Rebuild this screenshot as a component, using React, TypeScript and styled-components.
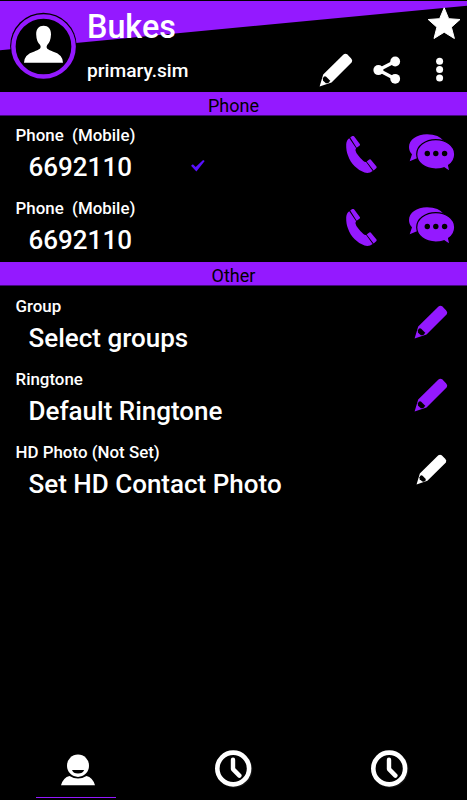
import React from "react";
import styled, { createGlobalStyle } from "styled-components";

const PURPLE = "#9419ff";

const GlobalStyle = createGlobalStyle`
  body { margin: 0; background: #000; }
  * { box-sizing: border-box; }
`;

const Screen = styled.main`
  width: 467px;
  height: 800px;
  display: flex;
  flex-direction: column;
  background: #000;
  color: #fff;
  font-family: Roboto, "Liberation Sans", sans-serif;
  font-weight: 500;
  overflow: hidden;
`;

const Header = styled.header`
  position: relative;
  height: 92px;
  flex: none;
  display: flex;
  padding-left: 10px;
`;

const Slope = styled.div`
  position: absolute;
  inset: 1px 0 0 0;
  background: ${PURPLE};
  clip-path: polygon(0 0, 100% 0, 100% 4.7px, 0 49.3px);
`;

const Avatar = styled.svg`
  position: relative;
  flex: none;
  width: 67px;
  height: 68px;
  margin-top: 12px;
`;

const Identity = styled.div`
  position: relative;
  flex: 1;
  padding-left: 10px;
  white-space: nowrap;
`;

const Name = styled.h1`
  margin: 8px 0 0;
  font-size: 32.3px;
  line-height: 38px;
  font-weight: 500;
`;

const Account = styled.div`
  margin-top: 14px;
  font-size: 19.2px;
  line-height: 22px;
`;

const Actions = styled.div`
  position: relative;
  width: 150px;
  display: flex;
  flex-direction: column;
  align-items: flex-end;
  padding: 7px 6px 0 0;
`;

const ActionRow = styled.div`
  display: flex;
  align-items: center;
  width: 142px;
  height: 36px;
  margin-top: 12px;
`;

const Icon = styled.svg<{ $ml?: number; $mt?: number }>`
  display: block;
  flex: none;
  margin-left: ${(p) => p.$ml ?? 0}px;
  margin-top: ${(p) => p.$mt ?? 0}px;
`;

const SectionTitle = styled.h2`
  flex: none;
  margin: 0;
  height: 24px;
  border-bottom: 1px solid #43097a;
  background: ${PURPLE};
  color: #000;
  text-align: center;
  font-size: 18px;
  font-weight: 400;
  line-height: 27px;
`;

const Section = styled.section<{ $height: number }>`
  flex: none;
  height: ${(p) => p.$height}px;
`;

const Row = styled.div`
  height: 73.2px;
  display: flex;
  padding: 0 12px 0 15.5px;
`;

const RowText = styled.div<{ $top?: number }>`
  flex: 1;
  padding-top: ${(p) => p.$top ?? 9.6}px;
  white-space: pre;
`;

const Label = styled.div`
  font-size: 16.9px;
  line-height: 21px;
`;

const Value = styled.div`
  display: flex;
  align-items: center;
  padding-left: 13px;
  margin-top: 6px;
  font-size: 26px;
  line-height: 31px;
`;

const EditSlot = styled.div`
  width: 45px;
  display: flex;
  justify-content: center;
  padding-right: 3px;
`;

const TabBar = styled.nav`
  display: grid;
  grid-template-columns: repeat(3, 1fr);
  height: 55px;
  margin-top: auto;
`;

const Tab = styled.div<{ $active?: boolean }>`
  display: flex;
  flex-direction: column;
  align-items: center;
  justify-content: space-between;
  padding-bottom: 2px;
  &::after {
    content: "";
    flex: none;
    width: 80px;
    height: 1px;
    margin-right: 3.6px;
    background: ${(p) => (p.$active ? PURPLE : "transparent")};
  }
`;

const Pencil = ({ color = PURPLE, size = 34, mt = 0 }) => (
  <Icon $mt={mt} width={size} height={size} viewBox="0 0 34 34">
    <path
      fill={color}
      d="M.6 33.5 4.2 21.5 24.5 1.5Q26.2 0 28.2 1.3L32 5.2Q34 7.1 32.8 9.3L12.5 29.4Z"
    />
    <path fill="#000" d="M3.8 25.5Q5.1 22.4 7.2 23.8L10.7 27.3Q11.3 29.4 8.5 30.3L6.9 30.2 4.1 27.7Z" />
  </Icon>
);

const Phone = () => (
  <Icon $mt={20} width="33" height="40" viewBox="-0.5 0 33 40">
    <path
      fill={PURPLE}
      d="M3.8 2.2Q.9 4 .7 8.5C.6 13 1.2 16 2.3 19C4 24 6.3 27.4 9.2 30.2Q14 35 19 36.6Q23.5 38 27.2 35.1L20.6 25.9Q19.3 26.4 17.9 25 14.9 22.6 12.8 19.6 10.3 16.4 10 14.4 9.9 13 10.6 12.2Z"
    />
    <path fill={PURPLE} d="M4.7 1.6 6.7.1Q7.8-.6 8.7.6L14.3 8Q14.9 9 13.9 9.8L11.2 11.7Z" />
    <path fill={PURPLE} d="M21.2 25.5 23.8 23.6Q24.8 22.9 25.6 23.9L31 30.6Q31.5 31.5 30.7 32.3L28.1 34.6Z" />
  </Icon>
);

const Chat = () => (
  <Icon $ml={30} $mt={18} width="47" height="38" viewBox="0 0 47 38">
    <g fill={PURPLE}>
      <path d="M19 .2C8.7.2 1 5.8 1 13Q1 17.4 4 20.2L1.7 27.2 9.5 24 29 20 36 7.3Q31 .2 19 .2Z" />
      <path
        stroke="#000"
        strokeWidth="1.2"
        d="M27.8 5.6C17.4 5.6 8.7 11.8 8.7 20.2S17 35 27.8 35Q32.4 35 36 33.7L41.8 37.4 40.6 31.3Q46.7 27.2 46.7 20.2C46.7 11.8 38 5.6 27.8 5.6Z"
      />
    </g>
    <g fill="#000">
      <circle cx="19.3" cy="19.5" r="2.7" />
      <circle cx="27.8" cy="19.5" r="2.7" />
      <circle cx="36.6" cy="19.5" r="2.7" />
    </g>
  </Icon>
);

const Check = () => (
  <Icon $ml={59.5} $mt={-3} width="14" height="12" viewBox="0 0 14 12">
    <path fill="#5910ff" d="M0 5.7 1.9 4.2 4.7 7.1 12.1 0 13.7 1.1 5.4 11.5Z" />
  </Icon>
);

const Clock = () => (
  <Icon $mt={5} width="39" height="39" viewBox="0 0 39 39">
    <circle cx="20" cy="19.3" r="17.8" fill="none" stroke="#151515" strokeWidth="1.3" />
    <circle cx="19.2" cy="18.5" r="15.9" fill="none" stroke="#fff" strokeWidth="4.6" />
    <path
      d="M19 9.7v9.4l6.4 6.5"
      fill="none"
      stroke="#fff"
      strokeWidth="4.4"
      strokeLinecap="round"
      strokeLinejoin="round"
    />
  </Icon>
);

export default function App() {
  return (
    <>
      <GlobalStyle />
      <Screen>
        <Header>
          <Slope />
          <Avatar viewBox="0 0 67 68">
            <circle cx="33.4" cy="34" r="33.3" />
            <circle cx="33.5" cy="34.5" r="30.1" fill="#000" stroke={PURPLE} strokeWidth="4.5" />
            <path
              fill="#fff"
              d="M33.6 13.8C29 13.8 26 16.9 26.2 22.5Q26.4 29.5 30.1 33.1C32 36.6 28.6 38 24.4 39.4Q14 42.4 14 50.8H53Q53 42.4 42.7 39.4C38.5 38 35.2 36.6 37.2 33.1Q40.7 29.5 41 22.5C41.2 16.9 38.1 13.8 33.6 13.8Z"
            />
          </Avatar>
          <Identity>
            <Name>Bukes</Name>
            <Account>primary.sim</Account>
          </Identity>
          <Actions>
            <Icon width="34" height="33" viewBox="0 0 34 33">
              <path
                fill="#fff"
                stroke="#fff"
                strokeWidth="1"
                strokeLinejoin="round"
                d="M17.2.8 21.7 11.7 33 12.5 24.4 20.2 27.4 31.5 17.2 25.2 7 31.5 9.9 20.2 1.2 12.5 12.6 11.7Z"
              />
            </Icon>
            <ActionRow>
              <Pencil color="#fff" />
              <Icon $ml={20} $mt={0} width="28" height="28" viewBox="0 0 28 28">
                <path d="M22 5.5 5.4 14.1 22 22.8" fill="none" stroke="#fff" strokeWidth="3.4" />
                <g fill="#fff">
                  <circle cx="22.2" cy="5.5" r="4.9" />
                  <circle cx="5.4" cy="14.1" r="5" />
                  <circle cx="22.2" cy="22.8" r="4.9" />
                </g>
              </Icon>
              <Icon $ml={35} $mt={-1} width="8" height="25" viewBox="0 0 8 25">
                <g fill="#fff">
                  <circle cx="3.6" cy="4.3" r="3.5" />
                  <circle cx="3.6" cy="12.6" r="3.5" />
                  <circle cx="3.6" cy="20.9" r="3.5" />
                </g>
              </Icon>
            </ActionRow>
          </Actions>
        </Header>

        <SectionTitle>Phone</SectionTitle>
        <Section $height={146}>
          {[true, false].map((isDefault) => (
            <Row key={String(isDefault)}>
              <RowText $top={9}>
                <Label>{"Phone  (Mobile)"}</Label>
                <Value>
                  6692110
                  {isDefault && <Check />}
                </Value>
              </RowText>
              <Phone />
              <Chat />
            </Row>
          ))}
        </Section>

        <SectionTitle>Other</SectionTitle>
        <Section $height={220}>
          {[
            { label: "Group", value: "Select groups", color: PURPLE },
            { label: "Ringtone", value: "Default Ringtone", color: PURPLE },
            { label: "HD Photo (Not Set)", value: "Set HD Contact Photo", color: "#fff" },
          ].map((item) => (
            <Row key={item.label}>
              <RowText>
                <Label>{item.label}</Label>
                <Value>{item.value}</Value>
              </RowText>
              <EditSlot>
                <Pencil
                  color={item.color}
                  size={item.color === PURPLE ? 34 : 31}
                  mt={item.color === PURPLE ? 19.3 : 21.3}
                />
              </EditSlot>
            </Row>
          ))}
        </Section>

        <TabBar>
          <Tab $active>
            <Icon $mt={9} $ml={1} width="36" height="32" viewBox="0 0 36 32">
              <path fill="#fff" d="M1 31.2Q3.4 23.1 9.5 21.9 18 27 26.5 21.9 32.6 23.1 35 31.2Z" />
              <ellipse cx="18" cy="11.7" rx="11" ry="11.2" fill="#fff" />
              <path fill="#000" d="M12 16H24.2Q22.8 19.6 18 19.6T12 16Z" />
            </Icon>
          </Tab>
          <Tab>
            <Clock />
          </Tab>
          <Tab>
            <Clock />
          </Tab>
        </TabBar>
      </Screen>
    </>
  );
}
